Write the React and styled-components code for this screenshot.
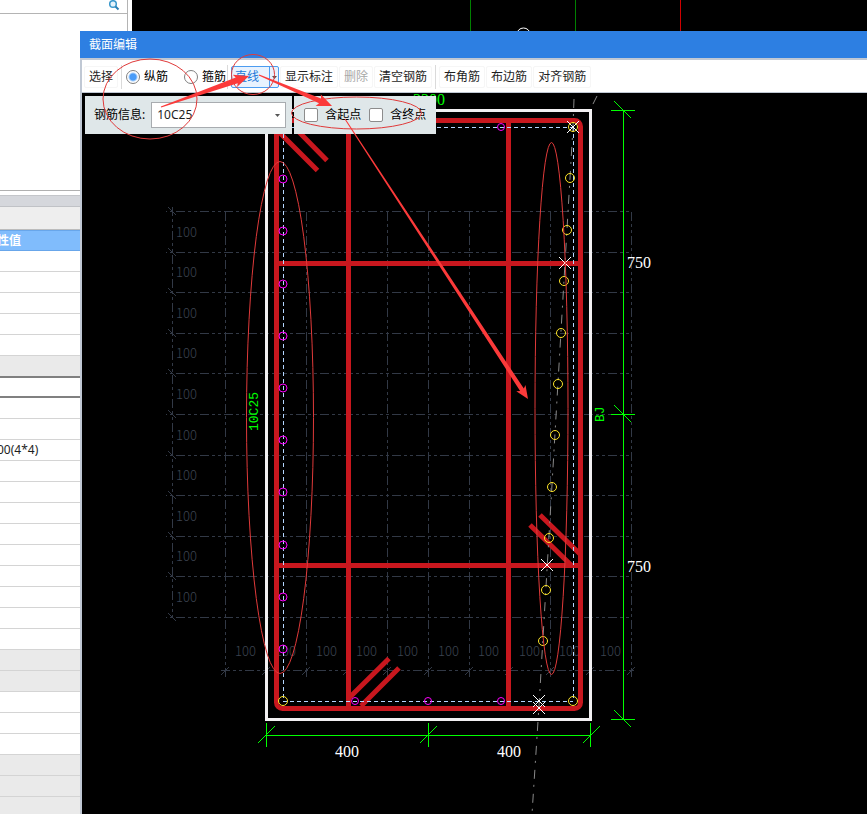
import React, { useState } from 'react';
import styled, { createGlobalStyle, css } from 'styled-components';

const GlobalStyle = createGlobalStyle`
  * {
    box-sizing: border-box;
  }

  body {
    margin: 0;
    background: #000;
    overflow: hidden;
  }

  body, button, input, select, table {
    font-family: 'Noto Sans', 'Noto Sans CJK SC', sans-serif;
    font-size: 12px;
    line-height: 16px;
    color: #1e1e1e;
  }
`;

const Desktop = styled.div`
  position: relative;
  display: flex;
  height: 100vh;
  overflow: hidden;
`;

const SidePanel = styled.aside`
  flex: 0 0 132px;
  display: flex;
  flex-direction: column;
  background: #fff;
  overflow: hidden;
`;

const TreePane = styled.div`
  height: 191px;
  flex: none;
  margin-right: 4px;
  border-right: 1px solid #b4b4b4;
  border-bottom: 1px solid #b0b0b0;
`;

const SearchRow = styled.div`
  display: flex;
  justify-content: flex-end;
  height: 14px;
  padding-right: 7px;
  border-bottom: 1px solid #b4b4b4;
`;

const IconButton = styled.button`
  display: flex;
  width: 12px;
  height: 12px;
  padding: 0;
  border: 0;
  background: none;
`;

const Splitter = styled.div`
  flex: none;
  height: 12px;
  margin-top: 4px;
  background: #d5d7dc;
  border-top: 1px solid #c4c6ca;
  border-bottom: 1px solid #c0c2c6;
`;

const PanelTitle = styled.div`
  flex: none;
  height: 23px;
  background: #eee;
  border-bottom: 1px solid #bcbcbc;
`;

const PropertyTable = styled.table`
  width: 100%;
  border-collapse: separate;
  border-spacing: 0;
  table-layout: fixed;
  margin-left: -3px;

  th {
    height: 21px;
    padding: 0;
    background: #80bcfc;
    border-top: 1px solid #68a6ea;
    border-bottom: 1px solid #68a6ea;
    color: #fff;
    font-weight: 700;
    text-align: left;
  }
`;

const Cell = styled.td`
  height: 21px;
  padding: 0;
  background: ${props => (props.$shade ? '#eaeaea' : '#fff')};
  border-bottom: 1px solid #d4d4d4;

  ${props => props.$last && css`
    height: 20px;
    border-bottom: 0;
  `}

  ${props => props.$current && css`
    height: 22px;
    border-top: 2px solid #808080;
    border-bottom: 2px solid #808080;
  `}
`;

const Backdrop = styled.div`
  flex: 1;
  overflow: hidden;
`;

const Dialog = styled.section`
  position: absolute;
  top: 31px;
  right: 0;
  bottom: 0;
  left: 80px;
  display: flex;
  flex-direction: column;
  background: #c0c8d4;
`;

const TitleBar = styled.h1`
  flex: none;
  height: 27px;
  margin: 0;
  padding: 0 9px;
  background: #2d7fe2;
  color: #fff;
  font-size: 12px;
  font-weight: 400;
  line-height: 28px;
`;

const Toolbar = styled.div`
  flex: none;
  display: flex;
  align-items: center;
  gap: 1px;
  height: 32px;
  margin: 2px 0 1px 2px;
  padding: 2px 0 0 2px;
  background: #fff;
  white-space: nowrap;
`;

const ToolButton = styled.button`
  height: 22px;
  padding: 0 4px;
  border: 1px solid #f6f6f6;
  border-radius: 2px;
  background: #fff;

  &:disabled {
    color: #a8a8a8;
  }
`;

const Separator = styled.div`
  width: 1px;
  height: 24px;
  margin: 0 2px;
  background: #dadada;
`;

const RadioGroup = styled.div`
  display: flex;
  gap: 16px;
  padding-left: 1px;
  margin-right: -2px;
`;

const RadioLabel = styled.label`
  display: flex;
  align-items: center;
  gap: 4px;
  color: #000;
`;

const Radio = styled.input`
  appearance: none;
  width: 14px;
  height: 14px;
  margin: 0;
  border: 1px solid #808080;
  border-radius: 50%;
  background: #fff;

  &:checked {
    background: radial-gradient(circle, #4a9cf8 3px, #fff 5px);
  }
`;

const SplitButton = styled.div`
  display: flex;
  height: 22px;
  border: 1px solid #4c9cf0;
  border-radius: 2px;
  background: #e8f2fe;
`;

const SplitMain = styled.button`
  width: 37px;
  padding: 0 0 0 3px;
  border: 0;
  background: none;
  color: #1a78d8;
  text-align: left;
`;

const SplitArrow = styled.button`
  display: flex;
  align-items: center;
  justify-content: center;
  width: 9px;
  padding: 0;
  border: 0;
  border-left: 1px solid #4c9cf0;
  background: none;
`;

const Canvas = styled.div`
  position: relative;
  flex: 1;
  margin-left: 2px;
  background: #000;
  overflow: hidden;
`;

const Drawing = styled.svg`
  display: block;
  width: 785px;
  height: 721px;
  font-family: 'Liberation Serif', serif;
`;

const FloatingBars = styled.div`
  position: absolute;
  top: 3px;
  left: 3px;
  display: flex;
  gap: 2px;
`;

const OptionBar = styled.div`
  display: flex;
  align-items: center;
  gap: ${props => props.$gap}px;
  height: 38px;
  padding: 0 ${props => props.$right}px 0 ${props => props.$left}px;
  background: #dfe7e9;
  color: #000;
  white-space: nowrap;
`;

const SelectWrap = styled.div`
  position: relative;
  width: 135px;

  svg {
    position: absolute;
    top: 12px;
    right: 6px;
    pointer-events: none;
  }
`;

const InfoSelect = styled.select`
  display: block;
  appearance: none;
  width: 100%;
  height: 26px;
  padding: 0 5px;
  border: 1px solid #a8acb0;
  border-radius: 0;
  background: #fff;
`;

const CheckLabel = styled.label`
  display: flex;
  align-items: center;
  gap: 7px;
`;

const Checkbox = styled.input`
  appearance: none;
  width: 14px;
  height: 14px;
  margin: 0;
  border: 1px solid #8c8c8c;
  border-radius: 2px;
  background: #fff;

  &:checked {
    background: #4a9cf8;
  }
`;

const MarkupLayer = styled.svg`
  position: absolute;
  top: 0;
  left: 0;
  width: 867px;
  height: 814px;
  pointer-events: none;
`;

const properties = [
  {}, {}, {}, {}, {},
  { shade: true, last: true },
  { current: true },
  {}, {},
  { value: '00(4*4)' },
  {}, {}, {}, {}, {}, {}, {}, {}, {},
  { shade: true }, { shade: true },
  {}, {}, {},
  { shade: true }, { shade: true }, { shade: true },
];

const gridY = [211, 252, 292, 333, 373, 414, 455, 495, 536, 576, 617];
const gridX = [225, 266, 306, 347, 387, 428, 469, 509, 550, 590, 631];
const sideBars = [179, 231, 284, 336, 388, 440, 492, 545, 597, 649];
const lineBars = [
  [573, 127], [570, 178], [567, 230], [564, 281], [561, 333], [558, 384],
  [555, 435], [552, 487], [549, 538], [546, 590], [543, 641],
];
const crosses = [[573, 127], [565, 263], [547, 565], [539, 701], [539, 708]];

const Caret = () => (
  <svg width="5" height="3" viewBox="0 0 5 3" aria-hidden="true">
    <path d="M0 0h5L2.5 3z" fill="#555" />
  </svg>
);

const AxisGrid = () => (
  <g stroke="#323946" fill="none">
    <g strokeDasharray="9 3 3 3 3 3" shapeRendering="crispEdges">
      {gridY.map(y => <path key={y} d={`M166 ${y + 0.5}H632`} strokeDashoffset="14" />)}
      {gridX.map(x => <path key={x} d={`M${x + 0.5} 212V677`} />)}
      <path d="M172.5 207V618" />
      <path d="M221 670.5H634" />
    </g>
    {gridY.map(y => <path key={y} d={`M168 ${y - 4}l8 8`} />)}
    {gridX.map(x => <path key={x} d={`M${x - 4} 675l8 -8`} />)}
    <g fill="#3c4350" stroke="none" fontSize="13" fontFamily="'Noto Sans CJK SC', sans-serif" fontWeight="300">
      {gridY.slice(1).map(y => <text key={y} x="176" y={y - 15}>100</text>)}
      {gridX.slice(1).map(x => <text key={x} x={x - 31} y="656">100</text>)}
    </g>
  </g>
);

const Stirrups = () => (
  <g stroke="#c8171e" strokeWidth="5" fill="none">
    <rect x="276.5" y="120.5" width="304" height="588" rx="6" />
    <path d="M348.5 121V708M508.5 121V708M275 263.5H582M275 565.5H582" />
    <path d="M277 130l40.500 40.500M297 130l30 30.500" />
    <path d="M530 525l41 40M540 515l40 39" />
    <path d="M349 698l40 -39.500M361 706l38 -38" />
  </g>
);

const Dimensions = () => (
  <g>
    <g stroke="#00ff00" fill="none">
      <path
        shapeRendering="crispEdges"
        d="M266 735.5H591M266.5 723V747M428.5 723V747M590.5 723V747M623.5 110V720M611 110.5H635M611 414.5H635M611 719.5H635"
      />
      <path d="M258 743l17 -17M420 743l17 -17M583 743l17 -17M614 101l17 17M614 405l17 17M614 710l17 17" />
    </g>
    <g fill="#fff" fontSize="16">
      <text x="627" y="268">750</text>
      <text x="627" y="572">750</text>
      <text x="335" y="757">400</text>
      <text x="497" y="757">400</text>
    </g>
    <g fill="#00ff00" fontFamily="'Liberation Mono', monospace" fontSize="13">
      <text x="413" y="105" fontFamily="'Liberation Serif', serif" fontSize="16">3300</text>
      <text transform="translate(258 431) rotate(-90)">10C25</text>
      <text transform="translate(604 422) rotate(-90)">BJ</text>
    </g>
  </g>
);

const Rebars = () => (
  <g fill="none">
    <g stroke="#b4d6ff" strokeDasharray="4 3" shapeRendering="crispEdges">
      <path d="M283.5 127V701M573.5 127V701M283 127.5H573M283 701.5H573" />
    </g>
    <path
      d="M574 99L573 127L539 706L532 814M597 96L591 108"
      stroke="#8a8a8a"
      strokeDasharray="9 6 2 7"
    />
    <g stroke="#ff00ff">
      {sideBars.map(y => <circle key={y} cx="283" cy={y} r="4" />)}
      {[355, 428, 501].map(x => <circle key={x} cx={x} cy="701" r="3.500" />)}
      <circle cx="501" cy="127" r="3.500" />
    </g>
    <g stroke="#ffe628">
      {lineBars.map(([x, y]) => (
        <circle key={y} cx={x} cy={y} r="4.500" />
      ))}
      <circle cx="573" cy="701" r="4.500" />
      <circle cx="283" cy="701" r="4.500" />
    </g>
    <g stroke="#fff">
      {crosses.map(([x, y]) => (
        <path key={y} d={`M${x - 6} ${y - 6}l12 12M${x + 6} ${y - 6}l-12 12`} />
      ))}
    </g>
  </g>
);

// arrow that grows from a point at its tail towards the head
const TaperArrow = ({ from, to, body, head }) => {
  const length = Math.hypot(to[0] - from[0], to[1] - from[1]);
  const angle = Math.atan2(to[1] - from[1], to[0] - from[0]) * 180 / Math.PI;
  const neck = length - head;
  return (
    <path
      fill="#fb3a3a"
      transform={`translate(${from[0]} ${from[1]}) rotate(${angle})`}
      d={`M0 -0.500L${neck} ${-body}L${neck - 2} ${-head / 2}L${length} 0L${neck - 2} ${head / 2}L${neck} ${body}L0 0.500z`}
    />
  );
};

const Markup = () => (
  <MarkupLayer viewBox="0 0 867 814" aria-hidden="true">
    <g fill="none" stroke="#e03a3a">
      <ellipse cx="150" cy="99" rx="47" ry="40" />
      <ellipse cx="253" cy="74.500" rx="21.500" ry="20" />
      <ellipse cx="356.500" cy="113" rx="65" ry="16" />
      <ellipse cx="280" cy="417.500" rx="33.500" ry="256" />
      <ellipse cx="551.500" cy="408.500" rx="16.500" ry="266" />
    </g>
    <TaperArrow from={[161, 107]} to={[249, 76]} body={3} head={13} />
    <TaperArrow from={[259, 75]} to={[332, 106]} body={2.6} head={13} />
    <TaperArrow from={[345, 119]} to={[528, 399]} body={2.2} head={11} />
  </MarkupLayer>
);

const App = () => {
  const [barType, setBarType] = useState('long');
  const [withStart, setWithStart] = useState(false);
  const [withEnd, setWithEnd] = useState(false);

  return (
    <Desktop>
      <GlobalStyle />
      <SidePanel>
        <TreePane>
          <SearchRow>
            <IconButton aria-label="搜索">
              <svg width="12" height="11" viewBox="0 0 12 11">
                <circle cx="5" cy="4" r="3.300" fill="#e4f3fc" stroke="#3a98cc" strokeWidth="1.500" />
                <path d="M7.500 6.500L10.500 9.500" stroke="#2b7fb4" strokeWidth="2" />
              </svg>
            </IconButton>
          </SearchRow>
        </TreePane>
        <Splitter />
        <PanelTitle />
        <PropertyTable>
          <thead>
            <tr><th>性值</th></tr>
          </thead>
          <tbody>
            {properties.map((row, index) => (
              <tr key={index}>
                <Cell $shade={row.shade} $last={row.last} $current={row.current}>{row.value}</Cell>
              </tr>
            ))}
          </tbody>
        </PropertyTable>
      </SidePanel>

      <Backdrop>
        <svg width="735" height="32" viewBox="132 0 735 32" aria-hidden="true">
          <path d="M470.500 0V32M575.500 0V32" stroke="#008000" />
          <path d="M680.500 0V32" stroke="#d00000" />
          <ellipse cx="523.500" cy="34" rx="6.500" ry="6" fill="none" stroke="#fff" />
        </svg>
      </Backdrop>

      <Dialog>
        <TitleBar>截面编辑</TitleBar>
        <Toolbar>
          <ToolButton>选择</ToolButton>
          <Separator />
          <RadioGroup>
            <RadioLabel>
              <Radio type="radio" name="barType" checked={barType === 'long'} onChange={() => setBarType('long')} />
              纵筋
            </RadioLabel>
            <RadioLabel>
              <Radio type="radio" name="barType" checked={barType === 'stirrup'} onChange={() => setBarType('stirrup')} />
              箍筋
            </RadioLabel>
          </RadioGroup>
          <Separator />
          <SplitButton>
            <SplitMain>直线</SplitMain>
            <SplitArrow aria-label="更多"><Caret /></SplitArrow>
          </SplitButton>
          <ToolButton>显示标注</ToolButton>
          <ToolButton disabled>删除</ToolButton>
          <ToolButton>清空钢筋</ToolButton>
          <Separator />
          <ToolButton>布角筋</ToolButton>
          <ToolButton>布边筋</ToolButton>
          <ToolButton>对齐钢筋</ToolButton>
        </Toolbar>

        <Canvas>
          <Drawing viewBox="82 93 785 721">
            <AxisGrid />
            <rect x="266.500" y="110.500" width="324" height="609" fill="none" stroke="#f2f0f2" strokeWidth="3" />
            <Stirrups />
            <Rebars />
            <Dimensions />
          </Drawing>
          <FloatingBars>
            <OptionBar $gap={6} $left={9} $right={6}>
              <label htmlFor="barInfo">钢筋信息:</label>
              <SelectWrap>
                <InfoSelect id="barInfo" defaultValue="10C25">
                  <option>10C25</option>
                </InfoSelect>
                <Caret />
              </SelectWrap>
            </OptionBar>
            <OptionBar $gap={8} $left={10} $right={10}>
              <CheckLabel>
                <Checkbox type="checkbox" checked={withStart} onChange={e => setWithStart(e.target.checked)} />
                含起点
              </CheckLabel>
              <CheckLabel>
                <Checkbox type="checkbox" checked={withEnd} onChange={e => setWithEnd(e.target.checked)} />
                含终点
              </CheckLabel>
            </OptionBar>
          </FloatingBars>
        </Canvas>
      </Dialog>

      <Markup />
    </Desktop>
  );
};

export default App;
